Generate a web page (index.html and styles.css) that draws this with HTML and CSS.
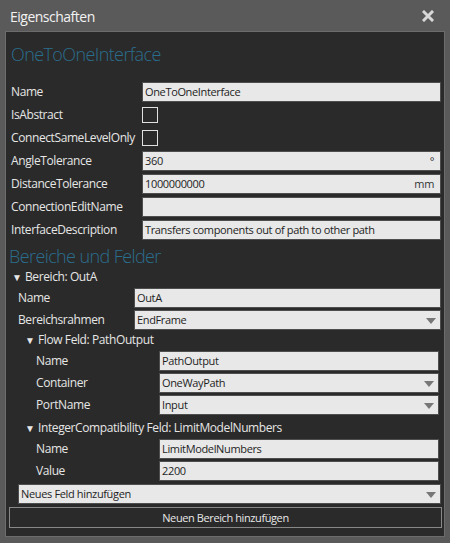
FILE: index.html
```html
<!DOCTYPE html>
<html>
<head>
<meta charset="utf-8">
<link rel="stylesheet" href="styles.css">
</head>
<body>
<div class="window">
  <div class="titlebar">
    <span class="title">Eigenschaften</span>
    <svg class="close" width="12" height="12" viewBox="0 0 12 12"><path d="M2 2 L10 10 M10 2 L2 10" stroke="#d8d8d8" stroke-width="3" stroke-linecap="square"/></svg>
  </div>
  <div class="panel">
    <div class="heading h1">OneToOneInterface</div>
    <div class="props top">
      <div class="label">Name</div><div class="field">OneToOneInterface</div>
      <div class="label">IsAbstract</div><div><span class="check"></span></div>
      <div class="label">ConnectSameLevelOnly</div><div><span class="check"></span></div>
      <div class="label">AngleTolerance</div><div class="field"><span>360</span><span class="unit">°</span></div>
      <div class="label">DistanceTolerance</div><div class="field"><span>1000000000</span><span class="unit">mm</span></div>
      <div class="label">ConnectionEditName</div><div class="field"></div>
      <div class="label">InterfaceDescription</div><div class="field">Transfers components out of path to other path</div>
    </div>
    <div class="heading h2">Bereiche und Felder</div>
    <div class="group g1">
      <div class="exp"><span class="tri">▼</span>Bereich: OutA</div>
      <div class="props p1">
        <div class="label">Name</div><div class="field">OutA</div>
        <div class="label">Bereichsrahmen</div><div class="field select">EndFrame</div>
      </div>
      <div class="group g2">
        <div class="exp"><span class="tri">▼</span>Flow Feld: PathOutput</div>
        <div class="props p2">
          <div class="label">Name</div><div class="field">PathOutput</div>
          <div class="label">Container</div><div class="field select">OneWayPath</div>
          <div class="label">PortName</div><div class="field select">Input</div>
        </div>
        <div class="exp exp-next"><span class="tri">▼</span>IntegerCompatibility Feld: LimitModelNumbers</div>
        <div class="props p2">
          <div class="label">Name</div><div class="field">LimitModelNumbers</div>
          <div class="label">Value</div><div class="field">2200</div>
        </div>
      </div>
      <div class="field select addfield">Neues Feld hinzufügen</div>
    </div>
    <div class="button">Neuen Bereich hinzufügen</div>
  </div>
</div>
</body>
</html>
```
FILE: styles.css
```css
html, body {
  margin: 0;
  padding: 0;
  background: #5a5a5a;
}
body {
  font-family: "Open Sans", "Noto Sans", sans-serif;
  font-size: 12px;
  letter-spacing: -0.4px;
  color: #e6e6e6;
}
.window {
  width: 450px;
  height: 543px;
  display: flex;
  flex-direction: column;
}
.titlebar {
  height: 31px;
  display: flex;
  align-items: center;
  justify-content: space-between;
  padding: 0 16px 0 10px;
  box-sizing: border-box;
}
.title {
  font-size: 14px;
  letter-spacing: -0.5px;
  color: #f2f2f2;
  margin-top: 2px;
}
.close {
  margin-top: 1px;
}
.panel {
  margin: 0 5px;
  height: 506px;
  box-sizing: border-box;
  border: 1px solid #6c6c6c;
  background: #2a2a2a;
  padding: 0 2px 0 3px;
  display: flex;
  flex-direction: column;
}
.heading {
  font-size: 18px;
  font-weight: 300;
  color: #2a6e8e;
  line-height: 24px;
  padding-left: 2px;
  letter-spacing: -0.6px;
}
.h1 {
  margin-top: 10px;
  margin-bottom: 16px;
}
.h2 {
  margin-top: 4px;
  padding-left: 0;
}
.props {
  display: grid;
  row-gap: 3px;
  align-items: center;
}
.top {
  grid-template-columns: 131px 1fr;
  padding-left: 2px;
  margin-right: 1px;
}
.label {
  white-space: nowrap;
  line-height: 20px;
}
.field {
  height: 20px;
  box-sizing: border-box;
  background: #e8e8e8;
  border: 1px solid #4e4e4e;
  color: #1e1e1e;
  font-size: 11px;
  letter-spacing: -0.35px;
  line-height: 18px;
  padding: 0 6px 0 2px;
  display: flex;
  justify-content: space-between;
  white-space: nowrap;
  overflow: hidden;
}
.unit {
  color: #333;
}
.check {
  display: block;
  width: 16px;
  height: 16px;
  box-sizing: border-box;
  border: 1px solid #e0e0e0;
}
.select {
  position: relative;
}
.select::after {
  content: "";
  position: absolute;
  right: 4px;
  top: 7px;
  border-left: 5px solid transparent;
  border-right: 5px solid transparent;
  border-top: 6px solid #777;
}
.exp {
  height: 16px;
  line-height: 16px;
  white-space: nowrap;
  display: flex;
  align-items: center;
}
.tri {
  display: block;
  font-size: 10px;
  line-height: 16px;
  width: 13px;
}
.g1 {
  padding-left: 3px;
  margin-right: 1px;
  margin-top: 1px;
}
.p1 {
  grid-template-columns: 116px 1fr;
  padding-left: 6px;
  margin-top: 3px;
  row-gap: 2px;
}
.g2 {
  padding-left: 13px;
  margin-right: 2px;
}
.g2 > .exp {
  margin-top: 2px;
}
.g2 > .exp-next {
  margin-top: 5px;
}
.p2 {
  grid-template-columns: 123px 1fr;
  padding-left: 11px;
  margin-top: 3px;
  row-gap: 2px;
}
.addfield {
  margin-top: 3px;
  margin-left: 6px;
}
.button {
  margin-top: 3px;
  height: 21px;
  box-sizing: border-box;
  border: 1px solid #888;
  text-align: center;
  line-height: 19px;
  font-size: 11px;
  color: #e8e8e8;
}
```
